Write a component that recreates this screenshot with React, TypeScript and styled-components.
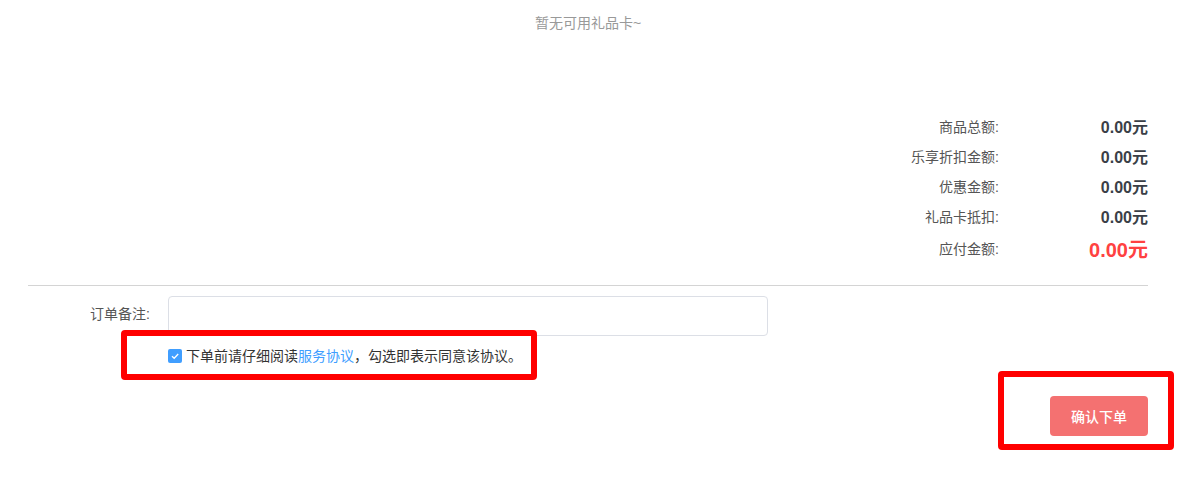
import React from "react";
import styled, { createGlobalStyle } from "styled-components";

const GlobalStyle = createGlobalStyle`
  html, body {
    margin: 0;
    padding: 0;
    background: #ffffff;
  }
  body {
    font-family: "Liberation Sans", "Noto Sans CJK SC", sans-serif;
    color: #333;
  }
`;

const Page = styled.div`
  width: 1120px;
  margin-left: 28px;
  padding-bottom: 43px;
  display: flex;
  flex-direction: column;
`;

const EmptyTip = styled.div`
  padding-top: 13px;
  height: 20px;
  line-height: 20px;
  font-size: 14px;
  color: #999;
  text-align: center;
`;

const Summary = styled.div`
  margin-top: 80px;
  display: flex;
  flex-direction: column;
`;

const SummaryRow = styled.div<{ $big?: boolean }>`
  display: flex;
  justify-content: flex-end;
  align-items: center;
  height: ${(p) => (p.$big ? "34px" : "30px")};
`;

const Label = styled.span`
  font-size: 14px;
  line-height: 20px;
  padding-bottom: 3px;
  color: #555;
  text-align: right;
`;

const Value = styled.span<{ $big?: boolean }>`
  width: 149px;
  text-align: right;
  font-weight: bold;
  line-height: 24px;
  padding-bottom: 1px;
  font-size: ${(p) => (p.$big ? "20px" : "16px")};
  color: ${(p) => (p.$big ? "#ff4141" : "#3a3f47")};
`;

const Divider = styled.div`
  margin-top: 18px;
  height: 1px;
  background: #d4d4d4;
`;

const RemarkRow = styled.div`
  margin-top: 10px;
  display: flex;
  align-items: center;
`;

const RemarkLabel = styled.span`
  width: 122px;
  text-align: right;
  font-size: 14px;
  line-height: 20px;
  padding-bottom: 5px;
  color: #555;
  margin-right: 18px;
`;

const RemarkInput = styled.input`
  box-sizing: border-box;
  width: 600px;
  height: 40px;
  border: 1px solid #dcdfe6;
  border-radius: 4px;
  outline: none;
  padding: 0 15px;
  font-size: 14px;
  background: #fff;
`;

const AgreementRow = styled.div`
  position: relative;
  margin-top: 10px;
  margin-left: 140px;
  width: 350px;
  height: 20px;
  display: flex;
  align-items: center;
  font-size: 14px;
  color: #333;
`;

const Highlight = styled.div<{ $t: number; $r: number; $b: number; $l: number }>`
  position: absolute;
  top: ${(p) => p.$t}px;
  right: ${(p) => p.$r}px;
  bottom: ${(p) => p.$b}px;
  left: ${(p) => p.$l}px;
  border: 6px solid #ff0000;
  border-radius: 4px;
  pointer-events: none;
`;

const CheckBox = styled.span`
  width: 14px;
  height: 14px;
  border-radius: 2px;
  background: #409eff;
  display: flex;
  align-items: center;
  justify-content: center;
  margin-right: 4px;
  flex-shrink: 0;
`;

const AgreeText = styled.span`
  line-height: 20px;
  white-space: nowrap;
`;

const Link = styled.a`
  color: #409eff;
  text-decoration: none;
`;

const ButtonRow = styled.div`
  margin-top: 30px;
  display: flex;
  justify-content: flex-end;
`;

const ButtonWrap = styled.div`
  position: relative;
  display: flex;
`;

const SubmitButton = styled.button`
  width: 98px;
  height: 40px;
  border: none;
  border-radius: 4px;
  background: #f47171;
  color: #fff;
  font-size: 14px;
  font-weight: 500;
  font-family: "Liberation Sans", "Noto Sans CJK SC", sans-serif;
  cursor: pointer;
  padding: 0;
`;

const rows = [
  { label: "商品总额:", value: "0.00元" },
  { label: "乐享折扣金额:", value: "0.00元" },
  { label: "优惠金额:", value: "0.00元" },
  { label: "礼品卡抵扣:", value: "0.00元" },
];

export default function App() {
  return (
    <>
      <GlobalStyle />
      <Page>
        <EmptyTip>暂无可用礼品卡~</EmptyTip>
        <Summary>
          {rows.map((r) => (
            <SummaryRow key={r.label}>
              <Label>{r.label}</Label>
              <Value>{r.value}</Value>
            </SummaryRow>
          ))}
          <SummaryRow $big>
            <Label>应付金额:</Label>
            <Value $big>0.00元</Value>
          </SummaryRow>
        </Summary>
        <Divider />
        <RemarkRow>
          <RemarkLabel>订单备注:</RemarkLabel>
          <RemarkInput type="text" />
        </RemarkRow>
        <AgreementRow>
          <Highlight $t={-16} $r={-19} $b={-14} $l={-47} />
          <CheckBox>
            <svg width="10" height="10" viewBox="0 0 10 10">
              <path d="M2 5.2 L4.2 7.3 L8.2 3" fill="none" stroke="#fff" strokeWidth="1.3" />
            </svg>
          </CheckBox>
          <AgreeText>
            下单前请仔细阅读<Link>服务协议</Link>，勾选即表示同意该协议。
          </AgreeText>
        </AgreementRow>
        <ButtonRow>
          <ButtonWrap>
            <Highlight $t={-25} $r={-26} $b={-14} $l={-52} />
            <SubmitButton>确认下单</SubmitButton>
          </ButtonWrap>
        </ButtonRow>
      </Page>
    </>
  );
}
